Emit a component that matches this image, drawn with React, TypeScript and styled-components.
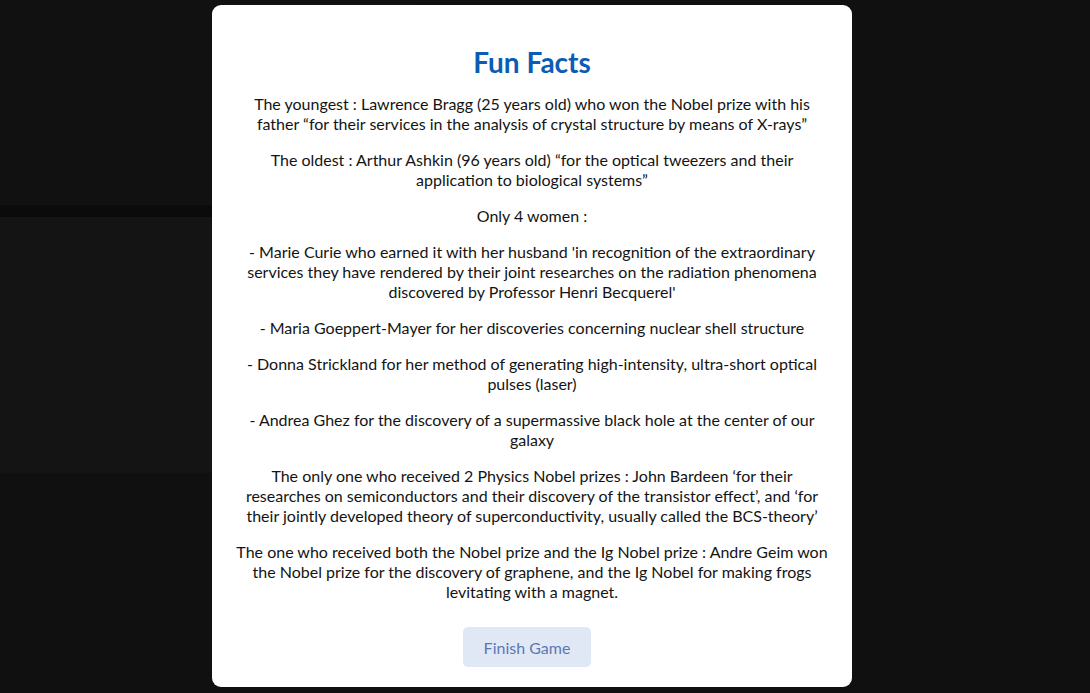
import React from "react";
import styled, { createGlobalStyle } from "styled-components";

const Global = createGlobalStyle`
  html, body { margin: 0; padding: 0; background: #101010; }
  body { font-family: "Lato", "Liberation Sans", sans-serif; }
  * { box-sizing: border-box; }
`;

const Page = styled.div`
  min-height: 693px;
  background: #101010;
  display: grid;
  grid-template-columns: 420px 1fr;
`;

const LeftColumn = styled.div`
  display: flex;
  flex-direction: column;
`;

const Block = styled.div<{ $h: number; $bg: string }>`
  height: ${(p) => p.$h}px;
  background: ${(p) => p.$bg};
`;

const Overlay = styled.div`
  position: fixed;
  inset: 0;
  display: flex;
  align-items: flex-start;
  padding: 5px 0 0 212px;
`;

const Modal = styled.div`
  width: 640px;
  background: #ffffff;
  border-radius: 9px;
  padding: 40px 24px 20px;
  display: flex;
  flex-direction: column;
  align-items: center;
  text-align: center;
`;

const Title = styled.h2`
  margin: 0 0 15px;
  font-size: 28px;
  line-height: 34px;
  font-weight: 700;
  color: #0b5cb5;
`;

const Fact = styled.p`
  margin: 0 0 16px;
  font-size: 16px;
  line-height: 20px;
  color: #141414;
  &:last-of-type { margin-bottom: 25px; }
`;

const FinishButton = styled.button`
  width: 128px;
  height: 40px;
  margin-right: 10px;
  border: none;
  border-radius: 5px;
  background: #e1e8f5;
  color: #5a77b4;
  font-family: inherit;
  font-size: 16px;
  cursor: pointer;
`;

const facts = [
  "The youngest : Lawrence Bragg (25 years old) who won the Nobel prize with his father \u201Cfor their services in the analysis of crystal structure by means of X-rays\u201D",
  "The oldest : Arthur Ashkin (96 years old) \u201Cfor the optical tweezers and their application to biological systems\u201D",
  "Only 4 women :",
  "- Marie Curie who earned it with her husband 'in recognition of the extraordinary services they have rendered by their joint researches on the radiation phenomena discovered by Professor Henri Becquerel'",
  "- Maria Goeppert-Mayer for her discoveries concerning nuclear shell structure",
  "- Donna Strickland for her method of generating high-intensity, ultra-short optical pulses (laser)",
  "- Andrea Ghez for the discovery of a supermassive black hole at the center of our galaxy",
  "The only one who received 2 Physics Nobel prizes : John Bardeen \u2018for their researches on semiconductors and their discovery of the transistor effect\u2019, and \u2018for their jointly developed theory of superconductivity, usually called the BCS-theory\u2019",
  "The one who received both the Nobel prize and the Ig Nobel prize : Andre Geim won the Nobel prize for the discovery of graphene, and the Ig Nobel for making frogs levitating with a magnet.",
];

export default function App() {
  return (
    <>
      <Global />
      <Page>
        <LeftColumn>
          <Block $h={205} $bg="#111111" />
          <Block $h={12} $bg="#0b0b0b" />
          <Block $h={256} $bg="#141414" />
        </LeftColumn>
        <div />
      </Page>
      <Overlay>
        <Modal>
          <Title>Fun Facts</Title>
          {facts.map((f, i) => (
            <Fact key={i}>{f}</Fact>
          ))}
          <FinishButton>Finish Game</FinishButton>
        </Modal>
      </Overlay>
    </>
  );
}
